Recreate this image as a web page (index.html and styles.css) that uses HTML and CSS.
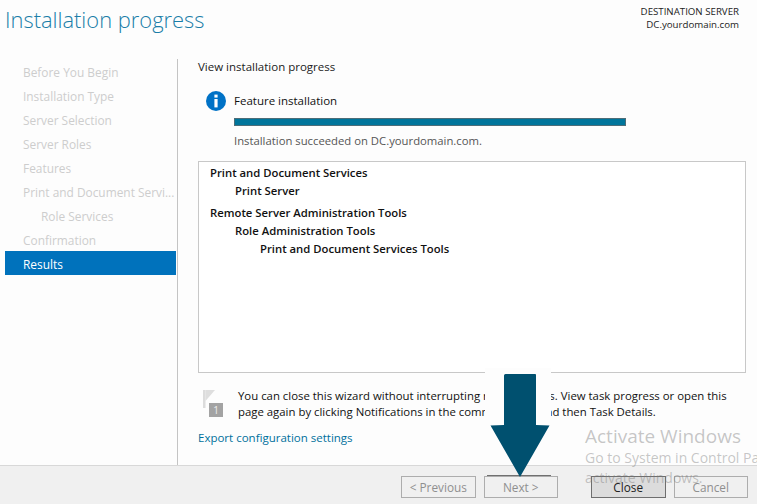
FILE: index.html
```html
<!DOCTYPE html>
<html lang="en">
<head>
<meta charset="utf-8">
<title>Installation progress</title>
<link rel="stylesheet" href="styles.css">
</head>
<body>
<div class="wizard">
  <header class="top">
    <h1 class="title">Installation progress</h1>
    <div class="dest"><div>DESTINATION SERVER</div><div>DC.yourdomain.com</div></div>
  </header>
  <div class="main">
    <nav class="nav">
      <div class="step">Before You Begin</div>
      <div class="step">Installation Type</div>
      <div class="step">Server Selection</div>
      <div class="step">Server Roles</div>
      <div class="step">Features</div>
      <div class="step">Print and Document Servi...</div>
      <div class="step sub">Role Services</div>
      <div class="step">Confirmation</div>
      <div class="step active">Results</div>
    </nav>
    <section class="content">
      <div class="lead">View installation progress</div>
      <div class="status">
        <svg class="info" width="20" height="20" viewBox="0 0 20 20"><circle cx="10" cy="10" r="10" fill="#0072c6"/><rect x="8.400" y="3.600" width="3.200" height="3" fill="#fff"/><rect x="8.400" y="8" width="3.200" height="8.400" fill="#fff"/></svg>
        <div class="status-body">
          <div class="status-title">Feature installation</div>
          <div class="bar"></div>
          <div class="status-msg">Installation succeeded on DC.yourdomain.com.</div>
        </div>
      </div>
      <div class="results">
        <div class="r r0">Print and Document Services</div>
        <div class="r r1">Print Server</div>
        <div class="r r0 gap">Remote Server Administration Tools</div>
        <div class="r r1">Role Administration Tools</div>
        <div class="r r2">Print and Document Services Tools</div>
      </div>
      <div class="note">
        <svg class="flag" width="24" height="28" viewBox="0 0 24 28"><rect x="1" y="0" width="2.500" height="18" fill="#dcdcdc"/><path d="M3.500 0H13L3.500 11Z" fill="#dedede"/><rect x="7" y="13" width="14" height="14" fill="#a3a3a3"/><text x="14" y="24" text-anchor="middle" class="flag-num">1</text></svg>
        <p class="note-text">You can close this wizard without interrupting running tasks. View task progress or open this<br>page again by clicking Notifications in the command bar, and then Task Details.</p>
      </div>
      <a class="export">Export configuration settings</a>
    </section>
  </div>
  <footer class="footer">
    <div class="btn">&lt; Previous</div>
    <div class="btn next">Next &gt;</div>
    <div class="btn close">Close</div>
    <div class="btn">Cancel</div>
  </footer>
  <div class="patch"></div>
  <div class="edge"></div>
  <svg class="arrow" width="60" height="103" viewBox="0 0 60 103"><path d="M14 1.500Q14 0 15.500 0H45.500Q46 0 46 1.500V51L59.500 51.500 30 103 .5 51.500 14 51Z" fill="#00506f"/></svg>
  <div class="watermark">
    <div class="wm-title">Activate Windows</div>
    <div class="wm-line">Go to System in Control Panel to</div>
    <div class="wm-line">activate Windows.</div>
  </div>
</div>
</body>
</html>
```
FILE: styles.css
```css
* { box-sizing: border-box; }
html, body { margin: 0; padding: 0; }
body { width: 757px; height: 504px; overflow: hidden; background: #fdfdfd; font-family: "Open Sans", "Noto Sans", sans-serif; font-size: 11.5px; color: #111; }
.wizard { position: relative; width: 757px; height: 504px; display: flex; flex-direction: column; overflow: hidden; }
.top { height: 59px; display: flex; justify-content: space-between; align-items: flex-start; flex: none; }
.title { margin: 4px 0 0 5px; font-size: 21.900px; line-height: 32px; font-weight: 300; color: #1a7ea8; }
.dest { margin: 5px 18px 0 0; text-align: right; font-size: 9.700px; line-height: 13px; color: #222; }
.main { flex: 1; display: flex; min-height: 0; }
.nav { margin-left: 5px; padding-right: 1px; border-right: 1px solid #c4c4c4; flex: none; width: 173px; font-size: 11.900px; }
.step { height: 24px; line-height: 26px; padding-left: 18px; color: #cdcdcd; white-space: nowrap; }
.step.sub { padding-left: 36px; }
.step.active { background: #0072bc; color: #fff; }
.content { flex: 1; padding-left: 20px; min-width: 0; }
.lead { line-height: 16px; color: #222; }
.status { display: flex; margin-top: 18px; margin-left: 8px; gap: 8px; align-items: flex-start; }
.info { flex: none; margin-top: -2px; }
.status-title { line-height: 16px; }
.bar { width: 392px; height: 8px; margin-top: 9px; background: #00759b; border: 1px solid #4d6d78; }
.status-msg { margin-top: 7px; line-height: 16px; color: #555; font-size: 11.300px; }
.results { width: 548px; height: 212px; margin-top: 12px; border: 1px solid #c8c8c8; background: #fff; padding: 2px 11px; }
.r { line-height: 18px; font-weight: 600; font-size: 11.300px; color: #111; }
.r1 { padding-left: 25px; }
.r2 { padding-left: 50px; }
.gap { margin-top: 4px; }
.note { display: flex; margin-top: 15px; margin-left: 4px; gap: 12px; }
.flag { flex: none; margin-top: 2px; }
.flag-num { font-size: 10px; fill: #eee; font-family: "Open Sans", sans-serif; }
.note-text { margin: 0; line-height: 16px; white-space: nowrap; color: #111; font-size: 11.380px; }
.export { display: block; margin-top: 10px; line-height: 16px; color: #00709c; }
.footer { height: 39px; flex: none; display: flex; background: #f0f0f0; border-top: 1px solid #d8d8d8; padding: 10px 9px 0 401px; gap: 8px; font-size: 11.800px; }
.btn { width: 75px; height: 22px; line-height: 20px; text-align: center; border: 1px solid #adadad; color: #8f8f8f; background: #f0f0f0; }
.next { margin-right: 25px; }
.close { background: #dcdcdc; border-color: #6e6e6e; color: #222; }
.patch { position: absolute; left: 485px; top: 368px; width: 66px; height: 97px; background: #fdfdfd; }
.edge { position: absolute; left: 487px; top: 475px; width: 64px; height: 1px; background: #707070; }
.arrow { position: absolute; left: 490px; top: 374px; }
.watermark { position: absolute; left: 585px; top: 425px; color: rgba(120,120,120,.42); white-space: nowrap; pointer-events: none; }
.wm-title { font-size: 19px; line-height: 22px; }
.wm-line { font-size: 14px; line-height: 20px; position: relative; top: 1px; }
```
